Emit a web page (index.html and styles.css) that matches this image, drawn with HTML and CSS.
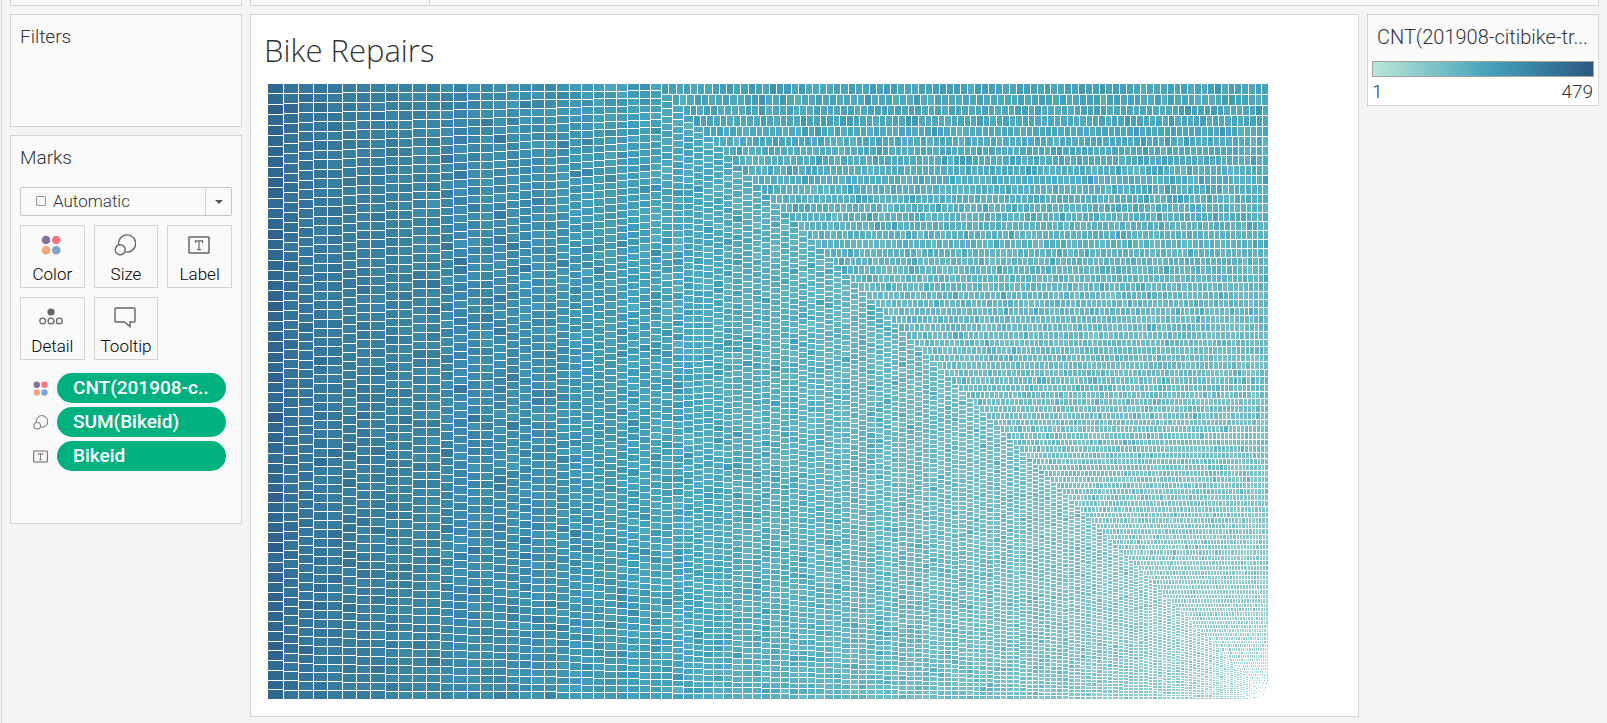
FILE: index.html
```html
<!DOCTYPE html>
<html lang="en">
<head>
<meta charset="utf-8">
<title>Bike Repairs</title>
<link rel="stylesheet" href="styles.css">
</head>
<body>
<svg class="sprite" aria-hidden="true">
  <symbol id="i-color" viewBox="0 0 20 20">
    <circle cx="5" cy="5" r="4.3" fill="#86709a"/><circle cx="15.3" cy="5" r="4.3" fill="#f9757f"/>
    <circle cx="5" cy="15.3" r="4.3" fill="#f2a679"/><circle cx="15.3" cy="15.3" r="4.3" fill="#7fa3cc"/>
  </symbol>
  <symbol id="i-size" viewBox="0 0 22 22" fill="none" stroke="#666" stroke-width="1.4">
    <path d="M4.6 10.8A8.6 8.6 0 1 1 11.4 17.9"/><circle cx="6.2" cy="15.8" r="5"/>
  </symbol>
  <symbol id="i-label" viewBox="0 0 22 18" fill="none" stroke="#666">
    <rect x="1" y="1" width="20" height="16" rx=".5" stroke-width="1.5"/>
    <path d="M7.5 7V4.9h7V7M11 5v8.6M9 13.7h4" stroke-width="1.2"/>
  </symbol>
  <symbol id="i-detail" viewBox="0 0 24 18">
    <circle cx="12" cy="4" r="3.6" fill="#666"/>
    <g fill="none" stroke="#666" stroke-width="1.3"><circle cx="3.7" cy="13" r="2.9"/><circle cx="12" cy="13" r="2.9"/><circle cx="20.3" cy="13" r="2.9"/></g>
  </symbol>
  <symbol id="i-tip" viewBox="0 0 22 21" fill="none" stroke="#666" stroke-width="1.4">
    <path d="M2 1h18q1 0 1 1v12q0 1-1 1h-4v4.6L10.600 15H2q-1 0-1-1V2q0-1 1-1z"/>
  </symbol>
</svg>

<div class="app">
  <div class="shelves">
    <div class="shelf shelf-side"></div>
    <div class="shelf shelf-main"><span class="shelf-name"></span></div>
  </div>
  <main class="workspace">
    <aside class="side">
      <section class="card filters"><h2 class="card-title">Filters</h2></section>
      <section class="card marks">
        <h2 class="card-title">Marks</h2>
        <div class="mark-type">
          <select class="mark-select" aria-label="Mark type"><option>Automatic</option></select>
          <span class="mark-square"></span>
          <span class="mark-arrow"></span>
        </div>
        <div class="mark-buttons">
          <button class="mark-btn"><svg class="ico-color"><use href="#i-color"/></svg>Color</button>
          <button class="mark-btn"><svg class="ico-size"><use href="#i-size"/></svg>Size</button>
          <button class="mark-btn"><svg class="ico-label"><use href="#i-label"/></svg>Label</button>
          <button class="mark-btn"><svg class="ico-detail"><use href="#i-detail"/></svg>Detail</button>
          <button class="mark-btn"><svg class="ico-tip"><use href="#i-tip"/></svg>Tooltip</button>
        </div>
        <ul class="pills">
          <li class="pill-row"><svg class="pill-ico"><use href="#i-color"/></svg><button class="pill">CNT(201908-c..</button></li>
          <li class="pill-row"><svg class="pill-ico"><use href="#i-size"/></svg><button class="pill">SUM(Bikeid)</button></li>
          <li class="pill-row"><svg class="pill-ico"><use href="#i-label"/></svg><button class="pill">Bikeid</button></li>
        </ul>
      </section>
    </aside>
    <section class="sheet">
      <h1 class="sheet-title">Bike Repairs</h1>
      <div class="plot"><canvas class="treemap" id="treemap" role="img" aria-label="Treemap of bike repairs"></canvas></div>
    </section>
    <aside class="legend">
      <h2 class="card-title legend-title">CNT(201908-citibike-tr...</h2>
      <div class="ramp"></div>
      <div class="range"><span>1</span><span>479</span></div>
    </aside>
  </main>
</div>
<script src="treemap.js"></script>
</body>
</html>
```
FILE: styles.css
```css
* { box-sizing: border-box; }
html, body { height: 100%; margin: 0; }
body { background: #f4f4f4; color: #333; font-family: Roboto, "Liberation Sans", sans-serif; font-size: 18px; }
h1, h2, ul { margin: 0; padding: 0; font-weight: 300; }
button, select { font: inherit; color: inherit; margin: 0; }
.sprite { position: absolute; width: 0; height: 0; }

.app { height: 100vh; min-height: 560px; display: flex; flex-direction: column; gap: 8px; padding: 0 8px 6px 8px; margin-left: 1px; border-left: 1px solid #d4d4d4; overflow: hidden; }
.shelves { display: flex; gap: 8px; height: 6px; flex: none; }
.shelf { background: #fafafa; border: 1px solid #d4d4d4; border-top: 0; }
.shelf-side { width: 232px; }
.shelf-main { flex: 1; display: flex; }
.shelf-name { width: 179px; border-right: 1px solid #d4d4d4; }

.workspace { flex: 1; min-height: 0; display: flex; align-items: stretch; gap: 8px; }
.side { width: 232px; display: flex; flex-direction: column; gap: 8px; }
.card, .legend { background: #fafafa; border: 1px solid #d4d4d4; }
.card { padding: 0 9px; }
.card-title { font-size: 19px; line-height: 24px; padding-top: 10px; white-space: nowrap; }
.filters { height: 113px; }
.marks { height: 389px; }

.mark-type { position: relative; margin-top: 17px; height: 29px; }
.mark-select { display: block; appearance: none; width: 100%; height: 29px; border: 1px solid #c4c4c4; border-radius: 2px; background: #fafafa; padding: 0 30px 2px 32px; font-size: 17px; font-weight: 300; }
.mark-square { position: absolute; left: 16px; top: 9px; width: 10px; height: 10px; border: 1px solid #999; border-radius: 1px; pointer-events: none; }
.mark-arrow { position: absolute; right: 0; top: 1px; width: 27px; height: 27px; border-left: 1px solid #d4d4d4; pointer-events: none; }
.mark-arrow::after { content: ""; position: absolute; left: 9px; top: 12px; border: 4px solid transparent; border-top-color: #555; border-bottom: 0; }

.mark-buttons { display: grid; grid-template-columns: repeat(3, 1fr); gap: 9px; margin-top: 9px; }
.mark-btn { height: 63px; border: 1px solid #d4d4d4; background: #fafafa; padding: 8px 0 0; display: grid; grid-template-rows: 22px 24px; row-gap: 6px; align-content: start; justify-items: center; align-items: center; font-size: 17px; font-weight: 300; color: #000; white-space: nowrap; }
.mark-btn svg { margin-right: 2px; }
.ico-color { width: 20px; height: 20px; }
.ico-size { width: 22px; height: 22px; }
.ico-label { width: 22px; height: 18px; }
.ico-detail { width: 24px; height: 18px; }
.ico-tip { width: 22px; height: 21px; }

.pills { list-style: none; margin-top: 13px; display: flex; flex-direction: column; gap: 4px; }
.pill-row { display: flex; align-items: center; gap: 9px; padding: 0 6px 0 13px; }
.pill-ico { width: 15px; height: 15px; flex: none; }
.pill { flex: 1; height: 30px; border: 0; border-radius: 15px; background: #00b180; color: #fff; text-align: left; padding: 0 0 1px 16px; font-size: 19px; font-weight: 500; white-space: nowrap; }

.sheet { flex: 1; min-width: 0; display: flex; flex-direction: column; background: #fff; border: 1px solid #d4d4d4; padding: 0 90px 17px 17px; }
.sheet-title { font-family: "Open Sans", sans-serif; font-size: 31px; line-height: 40px; height: 69px; padding-top: 15px; margin-left: -4px; }
.plot { flex: 1; min-height: 0; display: flex; }
.treemap { width: 100%; height: 100%; min-height: 0; flex: 1; }

.legend { width: 232px; height: 92px; background: #fff; }
.legend-title { font-size: 20px; height: 42px; padding-left: 9px; background: #fafafa; }
.ramp { height: 16px; margin: 4px 4px 3px; border: 1px solid #aaa092; background: linear-gradient(90deg, #bbe7d8, #43a2bb 53%, #2c5985); }
.range { display: flex; justify-content: space-between; margin: 0 5px 0 4px; line-height: 24px; font-size: 19px; font-weight: 300; }
```
FILE: treemap.js
```javascript
const canvas = document.getElementById("treemap");
const ctx = canvas.getContext("2d");

// remaining span -> band thickness
const SIZE = [[0, 1.2], [12, 2], [28, 3], [65, 3.9], [128, 4.9], [228, 6.1], [300, 7], [440, 8.6], [580, 10.1], [605, 10.9], [740, 12.6], [850, 13.7], [960, 14.6], [990, 15.2], [1001, 16]];
// remaining span -> position on the colour ramp
const TONE = [[0, 0.06], [30, 0.12], [100, 0.2], [228, 0.29], [400, 0.37], [520, 0.44], [605, 0.51], [740, 0.65], [850, 0.72], [960, 0.8], [985, 0.84], [1001, 0.91]];
const RAMP = [[0, 187, 231, 216], [0.53, 67, 162, 187], [1, 44, 89, 133]];

function lerp(table, x) {
  for (let i = 1; i < table.length; i++) {
    if (x <= table[i][0]) {
      const a = table[i - 1], b = table[i];
      return a[1] + (b[1] - a[1]) * (x - a[0]) / (b[0] - a[0]);
    }
  }
  return table[table.length - 1][1];
}

function shade(t) {
  t = Math.max(0, Math.min(1, t));
  const i = t <= RAMP[1][0] ? 0 : 1;
  const a = RAMP[i], b = RAMP[i + 1];
  const k = (t - a[0]) / (b[0] - a[0]);
  return "rgb(" + [1, 2, 3].map(c => Math.round(a[c] + (b[c] - a[c]) * k)).join(",") + ")";
}

function draw() {
  const W = canvas.clientWidth, H = canvas.clientHeight;
  canvas.width = W;
  canvas.height = H;
  let seed = 201908;
  const rnd = () => (seed = (seed * 16807) % 2147483647) / 2147483647;
  let x = 0, y = 0;
  const right = W + 1, bottom = H + 1;
  while (right - x > 1 && bottom - y > 1) {
    const w = right - x, h = bottom - y;
    const column = w >= h;
    const span = Math.max(w, h);
    const s = Math.min(lerp(SIZE, span), Math.min(w, h));
    const tone = lerp(TONE, span);
    const spread = span > 850 ? 0.6 : 1;
    const length = column ? h : w;
    const n = Math.max(1, Math.round(length * 1.58 / s));
    let p = 0;
    for (let i = 0; i < n; i++) {
      const next = i === n - 1 ? length : length * ((i + 1) / n) * (1.04 - 0.04 * (i + 1) / n);
      const r = rnd();
      let t = tone + (rnd() - 0.5) * 0.08 * spread;
      if (r > 0.9) t += 0.08 * spread;
      else if (r < 0.12) t -= 0.04 * spread;
      ctx.fillStyle = shade(t);
      const x0 = Math.round(column ? x : x + p), x1 = Math.round(column ? x + s : x + next);
      const y0 = Math.round(column ? y + p : y), y1 = Math.round(column ? y + next : y + s);
      ctx.fillRect(x0, y0, Math.max(0, x1 - x0 - 1), Math.max(0, y1 - y0 - 1));
      p = next;
    }
    if (column) x += s; else y += s;
  }
}

draw();
window.addEventListener("resize", draw);
```
